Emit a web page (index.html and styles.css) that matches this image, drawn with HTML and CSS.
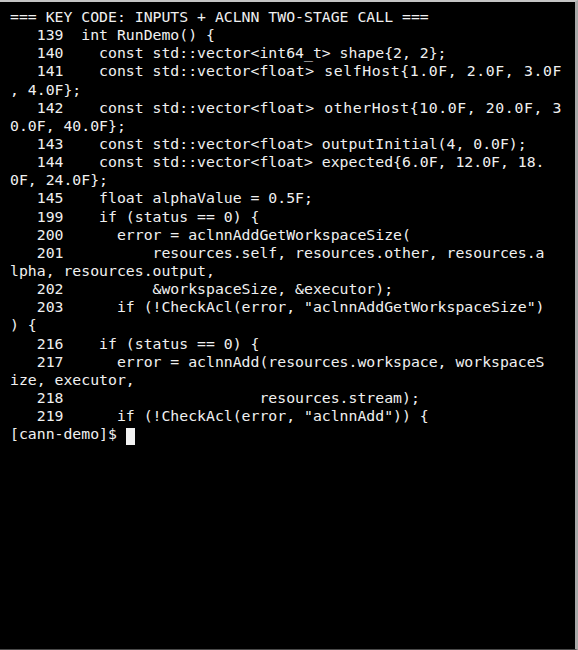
FILE: index.html
```html
<!DOCTYPE html>
<html>
<head>
<meta charset="utf-8">
<link rel="stylesheet" href="styles.css">
</head>
<body>
<div class="term">
<div class="screen">
<div class="row">=== KEY CODE: INPUTS + ACLNN TWO-STAGE CALL ===</div>
<div class="row">   139  int RunDemo() {</div>
<div class="row">   140    const std::vector&lt;int64_t&gt; shape{2, 2};</div>
<div class="row">   141    const std::vector&lt;flo<span class="wide">at&gt; selfHost{1.0F, 2.0F, 3.0F</span></div>
<div class="row">, 4.0F};</div>
<div class="row">   142    const std::vector&lt;flo<span class="wide">at&gt; otherHost{10.0F, 20.0F, 3</span></div>
<div class="row">0.0F, 40.0F};</div>
<div class="row">   143    const std::vector&lt;float&gt; outputInitial(4, 0.0F);</div>
<div class="row">   144    const std::vector&lt;float&gt; expected{6.0F, 12.0F, 18.</div>
<div class="row">0F, 24.0F};</div>
<div class="row">   145    float alphaValue = 0.5F;</div>
<div class="row">   199    if (status == 0) {</div>
<div class="row">   200      error = aclnnAddGetWorkspaceSize(</div>
<div class="row">   201          resources.self, resources.other, resources.a</div>
<div class="row">lpha, resources.output,</div>
<div class="row">   202          &amp;workspaceSize, &amp;executor);</div>
<div class="row">   203      if (!CheckAcl(error, "aclnnAddGetWorkspaceSize")</div>
<div class="row">) {</div>
<div class="row">   216    if (status == 0) {</div>
<div class="row">   217      error = aclnnAdd(resources.workspace, workspaceS</div>
<div class="row">ize, executor,</div>
<div class="row">   218                      resources.stream);</div>
<div class="row">   219      if (!CheckAcl(error, "aclnnAdd")) {</div>
<div class="row">[cann-demo]$ <span class="cursor"> </span></div>
</div>
</div>
</body>
</html>
```
FILE: styles.css
```css
html, body {
  margin: 0;
  padding: 0;
  background: #000;
}
.term {
  width: 578px;
  height: 650px;
  box-sizing: border-box;
  background: #000;
  border-top: 2px solid #c4c4c4;
  border-right: 3px solid #a9a9a9;
  border-bottom: 1px solid #4a4a4a;
  overflow: hidden;
}
.screen {
  padding: 6px 0 0 10px;
  font-family: "DejaVu Sans Mono", "Liberation Mono", monospace;
  font-size: 14.8px;
  line-height: 18.15px;
  color: #f0f0f0;
}
.row {
  white-space: pre;
  height: 18.15px;
}
.wide {
  letter-spacing: 0.6px;
}
.cursor {
  display: inline-block;
  width: 9px;
  height: 17px;
  background: #f2f2f2;
  vertical-align: -3px;
}
```
